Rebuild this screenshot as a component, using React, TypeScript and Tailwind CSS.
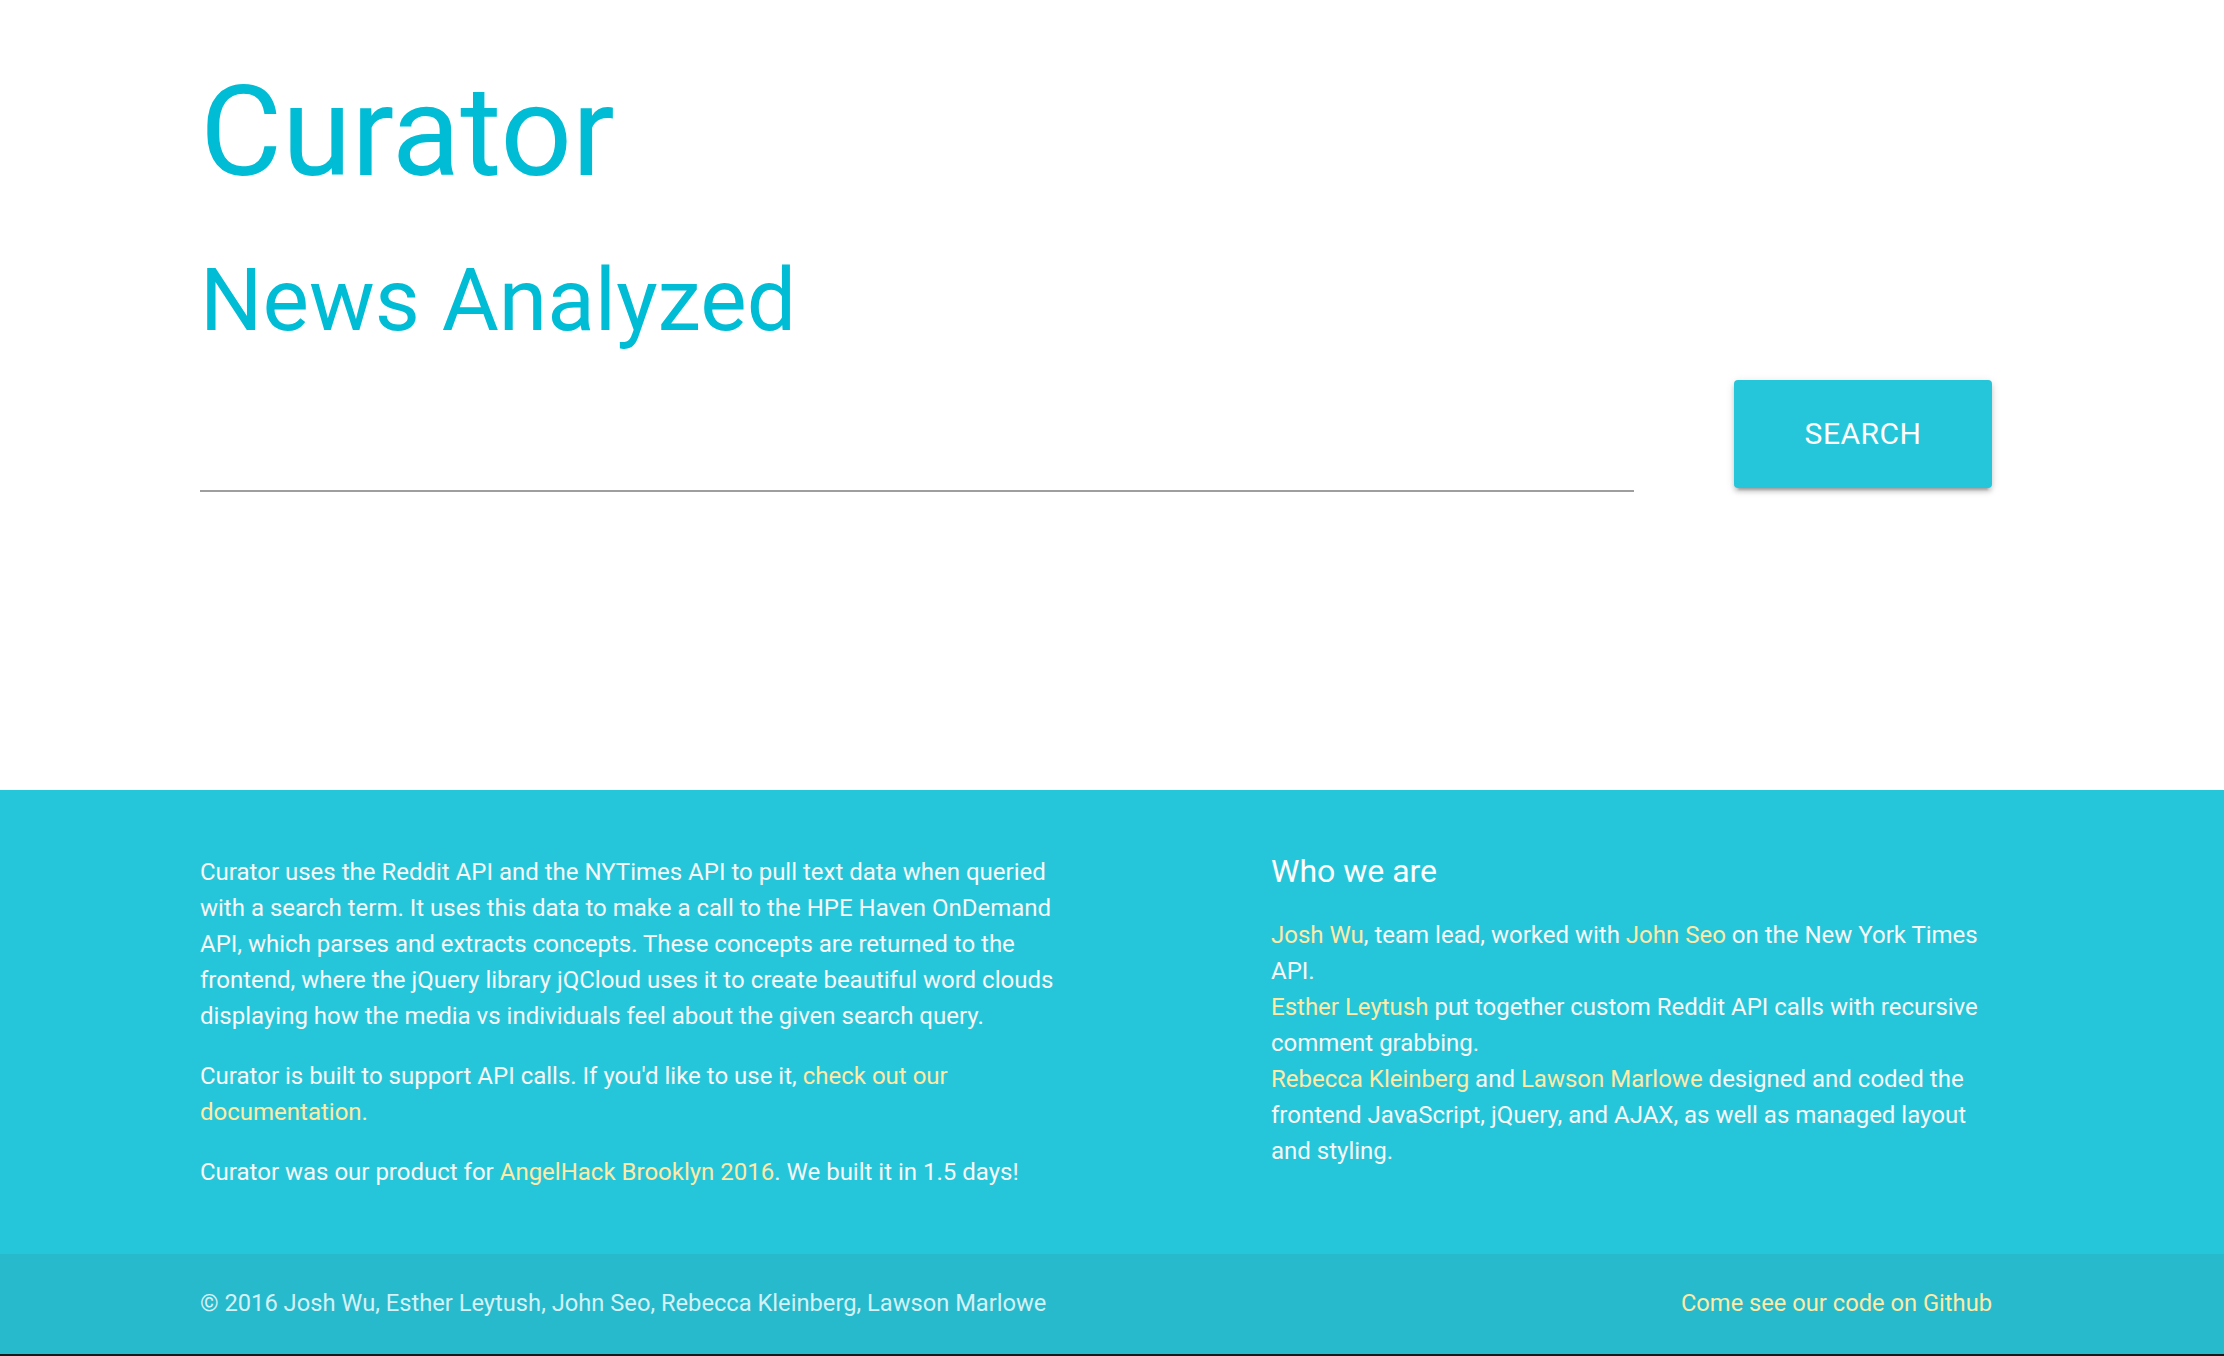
export default function App() {
  const link = "text-[#ffeaa6]";
  return (
    <div className="min-h-screen bg-white font-['Roboto',sans-serif]">
      <header className="h-[790px]">
        <div className="ml-[200px] w-[1792px]">
          <h1 className="pt-[63px] text-[126px] leading-[1.1] font-normal text-[#00bcd4]">Curator</h1>
          <h3 className="mt-[50px] text-[87.6px] leading-[1.1] font-normal text-[#00bcd4]">News Analyzed</h3>
          <div className="mt-[32px] flex items-start justify-between">
            <input
              type="text"
              className="h-[112px] w-[1434px] border-b-2 border-[#9e9e9e] bg-transparent text-[30px] outline-none"
            />
            <button className="h-[108px] w-[258px] rounded-[4px] bg-[#26c6da] text-[30px] tracking-[0.5px] text-white uppercase shadow-[0_4px_4px_0_rgba(0,0,0,0.14),0_2px_10px_0_rgba(0,0,0,0.12),0_6px_2px_-4px_rgba(0,0,0,0.2)]">
              Search
            </button>
          </div>
        </div>
      </header>

      <footer className="bg-[#26c6da] pt-[40px]">
        <div className="ml-[200px] mb-[40px] flex w-[1792px] text-[24px] leading-[36px] text-[#f7f7f7]">
          <div className="flex w-[873px] flex-col gap-[24px] py-[24px]">
            <p>
              Curator uses the Reddit API and the NYTimes API to pull text data when queried with a search term. It uses
              this data to make a call to the HPE Haven OnDemand API, which parses and extracts concepts. These concepts
              are returned to the frontend, where the jQuery library jQCloud uses it to create beautiful word clouds
              displaying how the media vs individuals feel about the given search query.
            </p>
            <p>
              Curator is built to support API calls. If you'd like to use it, <a className={link}>check out our documentation.</a>
            </p>
            <p>
              Curator was our product for <a className={link}>AngelHack Brooklyn 2016</a>. We built it in 1.5 days!
            </p>
          </div>
          <div className="ml-[198px] w-[720px]">
            <h5 className="mt-[23.5px] text-[32px] leading-[35px] text-white">Who we are</h5>
            <p className="mt-[28.5px]">
              <a className={link}>Josh Wu</a>, team lead, worked with <a className={link}>John Seo</a> on the New York Times
              API.
              <br />
              <a className={link}>Esther Leytush</a> put together custom Reddit API calls with recursive comment grabbing.
              <br />
              <a className={link}>Rebecca Kleinberg</a> and <a className={link}>Lawson Marlowe</a> designed and coded the
              frontend JavaScript, jQuery, and AJAX, as well as managed layout and styling.
            </p>
          </div>
        </div>
        <div className="flex h-[100px] items-center bg-[#27bacd]">
          <div className="ml-[200px] flex w-[1792px] justify-between text-[23.7px] text-[#d4f1f5]">
            <span>© 2016 Josh Wu, Esther Leytush, John Seo, Rebecca Kleinberg, Lawson Marlowe</span>
            <a className={link}>Come see our code on Github</a>
          </div>
        </div>
      </footer>
      <div className="h-[2px] bg-[#141a1a]" />
    </div>
  );
}
